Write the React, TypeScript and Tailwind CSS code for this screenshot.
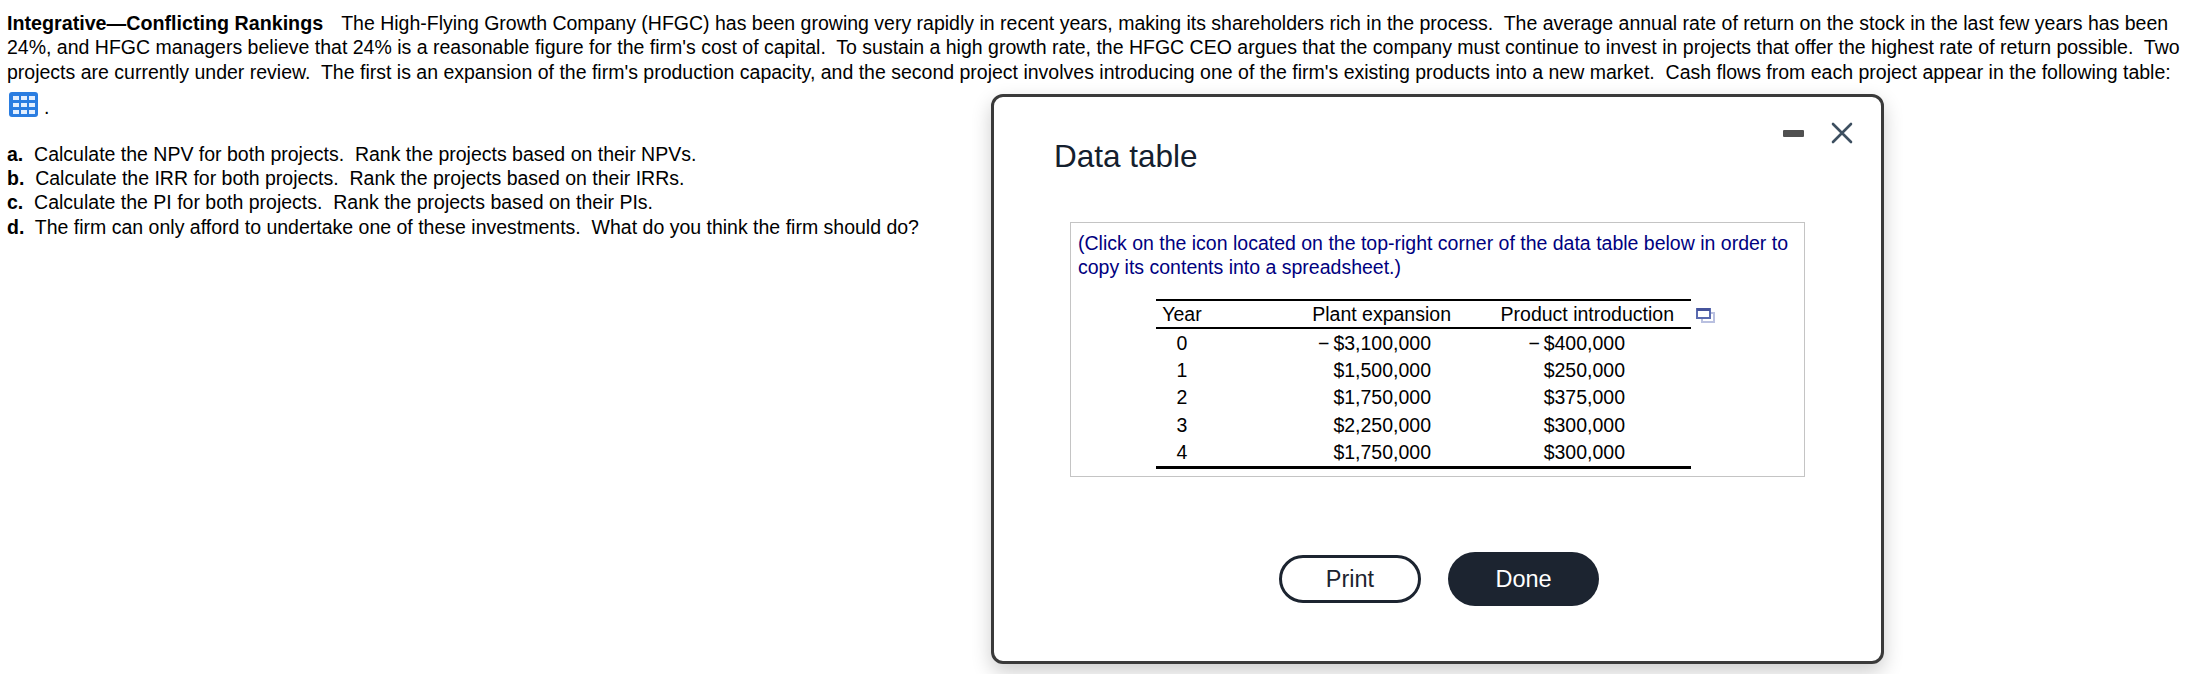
const rows = [
  ["0", "−\u2009$3,100,000", "−\u2009$400,000"],
  ["1", "$1,500,000", "$250,000"],
  ["2", "$1,750,000", "$375,000"],
  ["3", "$2,250,000", "$300,000"],
  ["4", "$1,750,000", "$300,000"],
]

const TableIcon = () => (
  <svg width="29" height="25" viewBox="0 0 29 25" className="inline-block">
    <rect width="29" height="25" rx="3" fill="#2a7de1" />
    <g fill="#e3efff">
      <rect x="4" y="4" width="6" height="4" />
      <rect x="12" y="4" width="6" height="4" />
      <rect x="20" y="4" width="6" height="4" />
      <rect x="4" y="11" width="6" height="4" />
      <rect x="12" y="11" width="6" height="4" />
      <rect x="20" y="11" width="6" height="4" />
      <rect x="4" y="18" width="6" height="4" />
      <rect x="12" y="18" width="6" height="4" />
      <rect x="20" y="18" width="6" height="4" />
    </g>
  </svg>
)

const CopyIcon = () => (
  <svg width="19" height="15" viewBox="0 0 19 15" className="mt-[9px] ml-[5px] shrink-0">
    <rect x="6" y="5" width="12" height="9" fill="#fff" stroke="#b9c0e0" strokeWidth="2" />
    <rect x="1" y="1" width="13" height="9" fill="#fff" stroke="#5a6bb0" strokeWidth="2" />
    <rect x="1" y="0" width="13" height="3" fill="#46549c" />
  </svg>
)

const App = () => {
  return (
    <div className="relative h-[674px] overflow-hidden bg-white font-['Liberation_Sans',Arial,sans-serif] text-[19.5px] leading-[24.3px] text-black">
      <div className="pl-[7px] pt-[11px] whitespace-nowrap">
        <p>
          <b className="text-[19.7px]">Integrative—Conflicting Rankings</b>
          <span className="ml-[18px]">The High-Flying Growth Company (HFGC) has been growing very rapidly in recent years, making its shareholders rich in the process.&nbsp; The average annual rate of return on the stock in the last few years has been</span>
          <br />
          24%, and HFGC managers believe that 24% is a reasonable figure for the firm's cost of capital.&nbsp; To sustain a high growth rate, the HFGC CEO argues that the company must continue to invest in projects that offer the highest rate of return possible.&nbsp; Two
          <br />
          projects are currently under review.&nbsp; The first is an expansion of the firm's production capacity, and the second project involves introducing one of the firm's existing products into a new market.&nbsp; Cash flows from each project appear in the following table:
        </p>
        <div className="mt-[8px] ml-[2px] flex items-end gap-[6px] h-[25px]">
          <TableIcon />
          <span className="leading-[20px]">.</span>
        </div>
        <ul className="mt-[25px]">
          <li><b>a.</b>&nbsp; Calculate the NPV for both projects.&nbsp; Rank the projects based on their NPVs.</li>
          <li><b>b.</b>&nbsp; Calculate the IRR for both projects.&nbsp; Rank the projects based on their IRRs.</li>
          <li><b>c.</b>&nbsp; Calculate the PI for both projects.&nbsp; Rank the projects based on their PIs.</li>
          <li><b>d.</b>&nbsp; The firm can only afford to undertake one of these investments.&nbsp; What do you think the firm should do?</li>
        </ul>
      </div>

      <div className="absolute left-[991px] top-[94px] h-[570px] w-[893px] rounded-[12px] border-[3px] border-[#3a3a3a] bg-white shadow-[0_8px_20px_rgba(0,0,0,0.2)]">
        <div className="absolute right-[28px] top-[25px] flex items-center gap-[27px]">
          <div className="h-[7px] w-[21px] rounded-[1px] bg-[#505050]" />
          <svg width="22" height="22" viewBox="0 0 22 22">
            <path d="M2 2 L20 20 M20 2 L2 20" stroke="#3d4f60" strokeWidth="2.6" strokeLinecap="round" />
          </svg>
        </div>

        <h2 className="pl-[60px] pt-[41px] text-[31.5px] leading-[36px] text-[#14202e]">Data table</h2>

        <div className="ml-[76px] mt-[48px] h-[255px] w-[735px] border border-[#c4c4c4] pl-[7px] pt-[8px] text-[#000080]">
          <p className="whitespace-nowrap leading-[24px]">
            (Click on the icon located on the top-right corner of the data table below in order to
            <br />
            copy its contents into a spreadsheet.)
          </p>
          <div className="ml-[78px] mt-[20px] flex items-start whitespace-nowrap text-black">
            <div className="w-[535px] border-b-[3px] border-t-2 border-b-black border-t-black">
              <div className="grid h-[28px] grid-cols-[52px_283px_200px] items-center border-b-2 border-black leading-[26px]">
                <div className="text-center">Year</div>
                <div className="pr-[40px] text-right">Plant expansion</div>
                <div className="pr-[17px] text-right">Product introduction</div>
              </div>
              {rows.map((r) => (
                <div key={r[0]} className="grid h-[27.4px] grid-cols-[52px_283px_200px] items-center">
                  <div className="text-center">{r[0]}</div>
                  <div className="pr-[60px] text-right">{r[1]}</div>
                  <div className="pr-[66px] text-right">{r[2]}</div>
                </div>
              ))}
            </div>
            <CopyIcon />
          </div>
        </div>

        <div className="ml-[3px] mt-[75px] flex items-center justify-center gap-[27px] text-[23.5px]">
          <button className="h-[48px] w-[142px] rounded-[24px] border-[3px] border-[#1c2430] bg-white text-[#1c2430]">Print</button>
          <button className="h-[54px] w-[151px] rounded-[27px] bg-[#1c2430] text-white">Done</button>
        </div>
      </div>
    </div>
  )
}

export default App
